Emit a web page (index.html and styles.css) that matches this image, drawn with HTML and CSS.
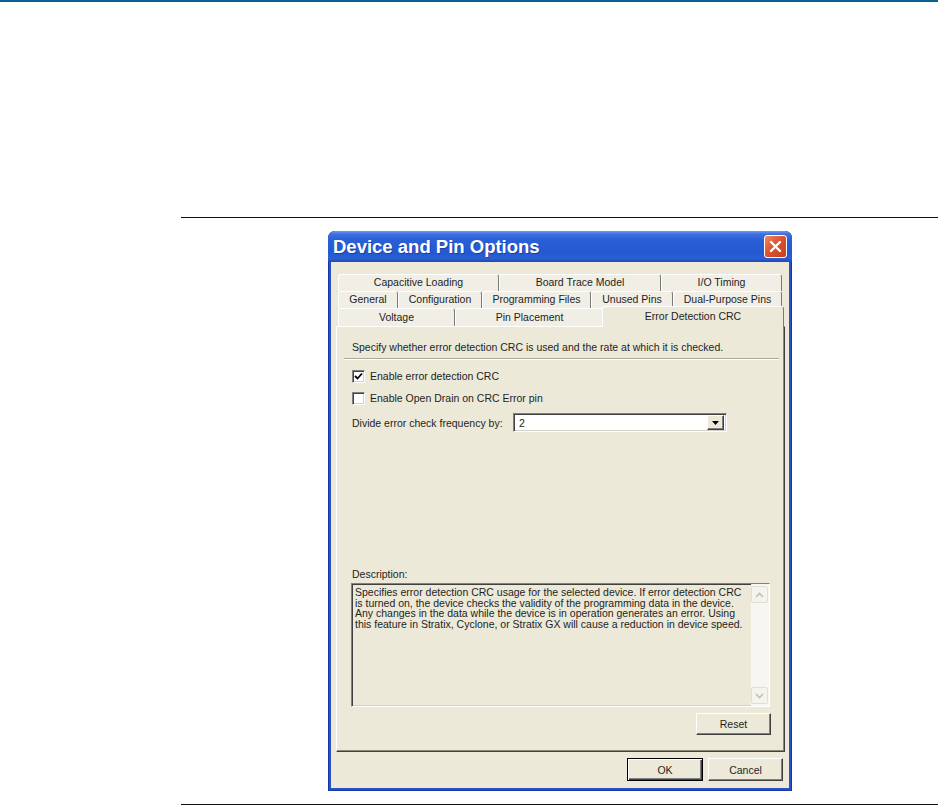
FILE: index.html
```html
<!DOCTYPE html>
<html lang="en">
<head>
    <meta charset="UTF-8">
    <meta name="viewport" content="width=device-width, initial-scale=1.0">
    <title>Device and Pin Options</title>
    <link rel="stylesheet" href="styles.css">
</head>
<body>
    <div class="topbar"></div>

    <div class="figure">
        <div class="window">
            <div class="titlebar">
                <span class="title">Device and Pin Options</span>
                <div class="close">
                    <svg width="13" height="13" viewBox="0 0 13 13"><path d="M2 2 L11 11 M11 2 L2 11" stroke="#fff" stroke-width="2.4" stroke-linecap="round"/></svg>
                </div>
            </div>

            <div class="client">
                <div class="tab-row row1">
                    <div class="tab">Capacitive Loading</div>
                    <div class="tab">Board Trace Model</div>
                    <div class="tab">I/O Timing</div>
                </div>
                <div class="tab-row row2">
                    <div class="tab">General</div>
                    <div class="tab">Configuration</div>
                    <div class="tab">Programming Files</div>
                    <div class="tab">Unused Pins</div>
                    <div class="tab">Dual-Purpose Pins</div>
                </div>
                <div class="tab-row row3">
                    <div class="tab">Voltage</div>
                    <div class="tab">Pin Placement</div>
                    <div class="tab active">Error Detection CRC</div>
                </div>

                <div class="pane">
                    <div class="pane-head">Specify whether error detection CRC is used and the rate at which it is checked.</div>
                    <div class="sep"></div>

                    <div class="options">
                        <div class="check">
                            <span class="box">
                                <svg width="9" height="9" viewBox="0 0 9 9"><path d="M1 4 L3.5 6.5 L8 1.5" fill="none" stroke="#000" stroke-width="1.8"/></svg>
                            </span>
                            <span>Enable error detection CRC</span>
                        </div>
                        <div class="check second">
                            <span class="box"></span>
                            <span>Enable Open Drain on CRC Error pin</span>
                        </div>

                        <div class="freq">
                            <span class="freq-label">Divide error check frequency by:</span>
                            <div class="combo">
                                <span>2</span>
                                <span class="combo-btn">
                                    <svg width="7" height="4" viewBox="0 0 7 4"><path d="M0 0 H7 L3.5 4 Z" fill="#000"/></svg>
                                </span>
                            </div>
                        </div>

                        <div class="desc-label">Description:</div>
                        <div class="desc">
                            <div class="desc-text">
                                Specifies error detection CRC usage for the selected device. If error detection CRC<br>
                                is turned on, the device checks the validity of the programming data in the device.<br>
                                Any changes in the data while the device is in operation generates an error. Using<br>
                                this feature in Stratix, Cyclone, or Stratix GX will cause a reduction in device speed.
                            </div>
                            <div class="scroll">
                                <span class="scroll-btn">
                                    <svg width="9" height="6" viewBox="0 0 9 6"><path d="M1 5 L4.5 1.5 L8 5" fill="none" stroke="#c3c0b2" stroke-width="1.6"/></svg>
                                </span>
                                <span class="scroll-btn">
                                    <svg width="9" height="6" viewBox="0 0 9 6"><path d="M1 1 L4.5 4.5 L8 1" fill="none" stroke="#c3c0b2" stroke-width="1.6"/></svg>
                                </span>
                            </div>
                        </div>

                        <button class="btn reset">Reset</button>
                    </div>
                </div>

                <div class="dialog-buttons">
                    <button class="btn default">OK</button>
                    <button class="btn">Cancel</button>
                </div>
            </div>
        </div>
    </div>
</body>
</html>
```

FILE: styles.css
```css
* {
    box-sizing: border-box;
}

body {
    margin: 0;
    background: #fff;
    font-family: "Liberation Sans", Arial, sans-serif;
    font-size: 10.5px;
    color: #1e1e1e;
}

.topbar {
    height: 2px;
    background: #0a6093;
}

.figure {
    margin: 215px 0 0 181px;
    padding: 13px 0 13px 147px;
    border-top: 1px solid #111;
    border-bottom: 1px solid #111;
}

/* xp style window */
.window {
    width: 464px;
    height: 560px;
    display: flex;
    flex-direction: column;
    background: #2652c8;
    border-radius: 7px 7px 0 0;
    box-shadow: inset 0 0 0 1px #16379e;
}

.titlebar {
    height: 31px;
    flex: none;
    display: flex;
    align-items: center;
    justify-content: space-between;
    padding: 0 5px;
    border-radius: 7px 7px 0 0;
    background: linear-gradient(to bottom, #6f9cf0 0%, #3a70e0 10%, #2a60d6 30%, #2458d0 70%, #2b5fd4 88%, #1e49b6 100%);
}

.title {
    color: #fff;
    font-weight: bold;
    font-size: 18.5px;
    text-shadow: 1px 1px 0 rgba(12, 30, 110, 0.45);
}

.close {
    width: 23px;
    height: 23px;
    display: flex;
    align-items: center;
    justify-content: center;
    border: 1px solid #fff;
    border-radius: 3px;
    background: linear-gradient(135deg, #ee8a62, #dc5530 45%, #c63f1c);
}

.client {
    flex: 1;
    margin: 0 3px 3px;
    padding: 12px 4px 7px 5px;
    background: #ece9d8;
}

/* tabs */
.tab-row {
    display: grid;
    width: 444px;
    margin-left: 2px;
}

.row1 {
    grid-template-columns: 161px 162px 121px;
    height: 17px;
}

.row2 {
    grid-template-columns: 60px 84px 109px 82px 109px;
    height: 17px;
}

.row3 {
    grid-template-columns: 117px 149px 178px;
    height: 18px;
}

.tab {
    background: #f0eee5;
    border-top: 1px solid #fff;
    border-left: 1px solid #fff;
    border-right: 1px solid #7a7a7a;
    border-radius: 3px 3px 0 0;
    text-align: center;
    line-height: 15px;
    white-space: nowrap;
}

.row3 .tab {
    line-height: 16px;
}

.row3 .tab.active {
    position: relative;
    z-index: 1;
    margin: -2px -2px -1px;
    background: #ece9d8;
    line-height: 18px;
}

/* page of the tab control */
.pane {
    height: 426px;
    display: flex;
    flex-direction: column;
    background: #ece9d8;
    border: 1px solid;
    border-color: #fff #404040 #404040 #fff;
    box-shadow: inset -1px -1px 0 #8a877c;
}

.pane-head {
    margin: 14px 0 0 15px;
    line-height: 13px;
}

.sep {
    margin: 4px 5px 0 7px;
    border-top: 1px solid #aca899;
    border-bottom: 1px solid #fff;
}

.options {
    flex: 1;
    display: flex;
    flex-direction: column;
    padding: 0 13px 0 15px;
}

.check {
    display: flex;
    align-items: center;
    gap: 5px;
    height: 13px;
    margin-top: 10px;
    line-height: 13px;
}

.check.second {
    margin-top: 9px;
}

.box,
.combo,
.desc {
    border: 1px solid;
    border-color: #808080 #fff #fff #808080;
    box-shadow: inset 1px 1px 0 #404040, inset -1px -1px 0 #d4d0c8;
}

.box {
    width: 13px;
    height: 13px;
    display: flex;
    align-items: center;
    justify-content: center;
    background: #fff;
}

.freq {
    display: flex;
    align-items: center;
    height: 19px;
    margin-top: 8px;
}

.freq-label {
    width: 161px;
}

.combo {
    width: 214px;
    height: 19px;
    display: flex;
    align-items: center;
    justify-content: space-between;
    padding: 0 2px 0 5px;
    background: #fff;
}

.combo-btn {
    width: 17px;
    height: 15px;
    display: flex;
    align-items: center;
    justify-content: center;
    background: #ece9d8;
    border: 1px solid;
    border-color: #fff #404040 #404040 #fff;
    box-shadow: inset -1px -1px 0 #808080;
}

.desc-label {
    margin-top: 136px;
    line-height: 13px;
}

.desc {
    width: 419px;
    height: 124px;
    display: flex;
    margin: 2px 0 0 -1px;
    background: #ece9d8;
}

.desc-text {
    flex: 1;
    padding: 3px 2px 0 3px;
    line-height: 10.7px;
    white-space: nowrap;
}

.scroll {
    width: 18px;
    display: flex;
    flex-direction: column;
    justify-content: space-between;
    padding: 2px 1px 2px 0;
    background: #f7f6f1;
}

.scroll-btn {
    height: 17px;
    display: flex;
    align-items: center;
    justify-content: center;
    border: 1px solid #e2dfd2;
    border-radius: 2px;
    background: #f4f3ee;
}

/* buttons */
.btn {
    width: 75px;
    height: 22px;
    padding: 0;
    font: inherit;
    color: inherit;
    background: #ece9d8;
    border: 1px solid;
    border-color: #fff #404040 #404040 #fff;
    box-shadow: inset -1px -1px 0 #808080;
}

.btn.reset {
    align-self: flex-end;
    margin-top: 6px;
}

.dialog-buttons {
    display: flex;
    justify-content: flex-end;
    gap: 5px;
    margin: 6px 2px 0 0;
}

.dialog-buttons .btn {
    height: 23px;
}

.btn.default {
    width: 76px;
    border-color: #000;
    box-shadow: inset 1px 1px 0 #fff, inset -1px -1px 0 #404040, inset -2px -2px 0 #808080;
}
```
